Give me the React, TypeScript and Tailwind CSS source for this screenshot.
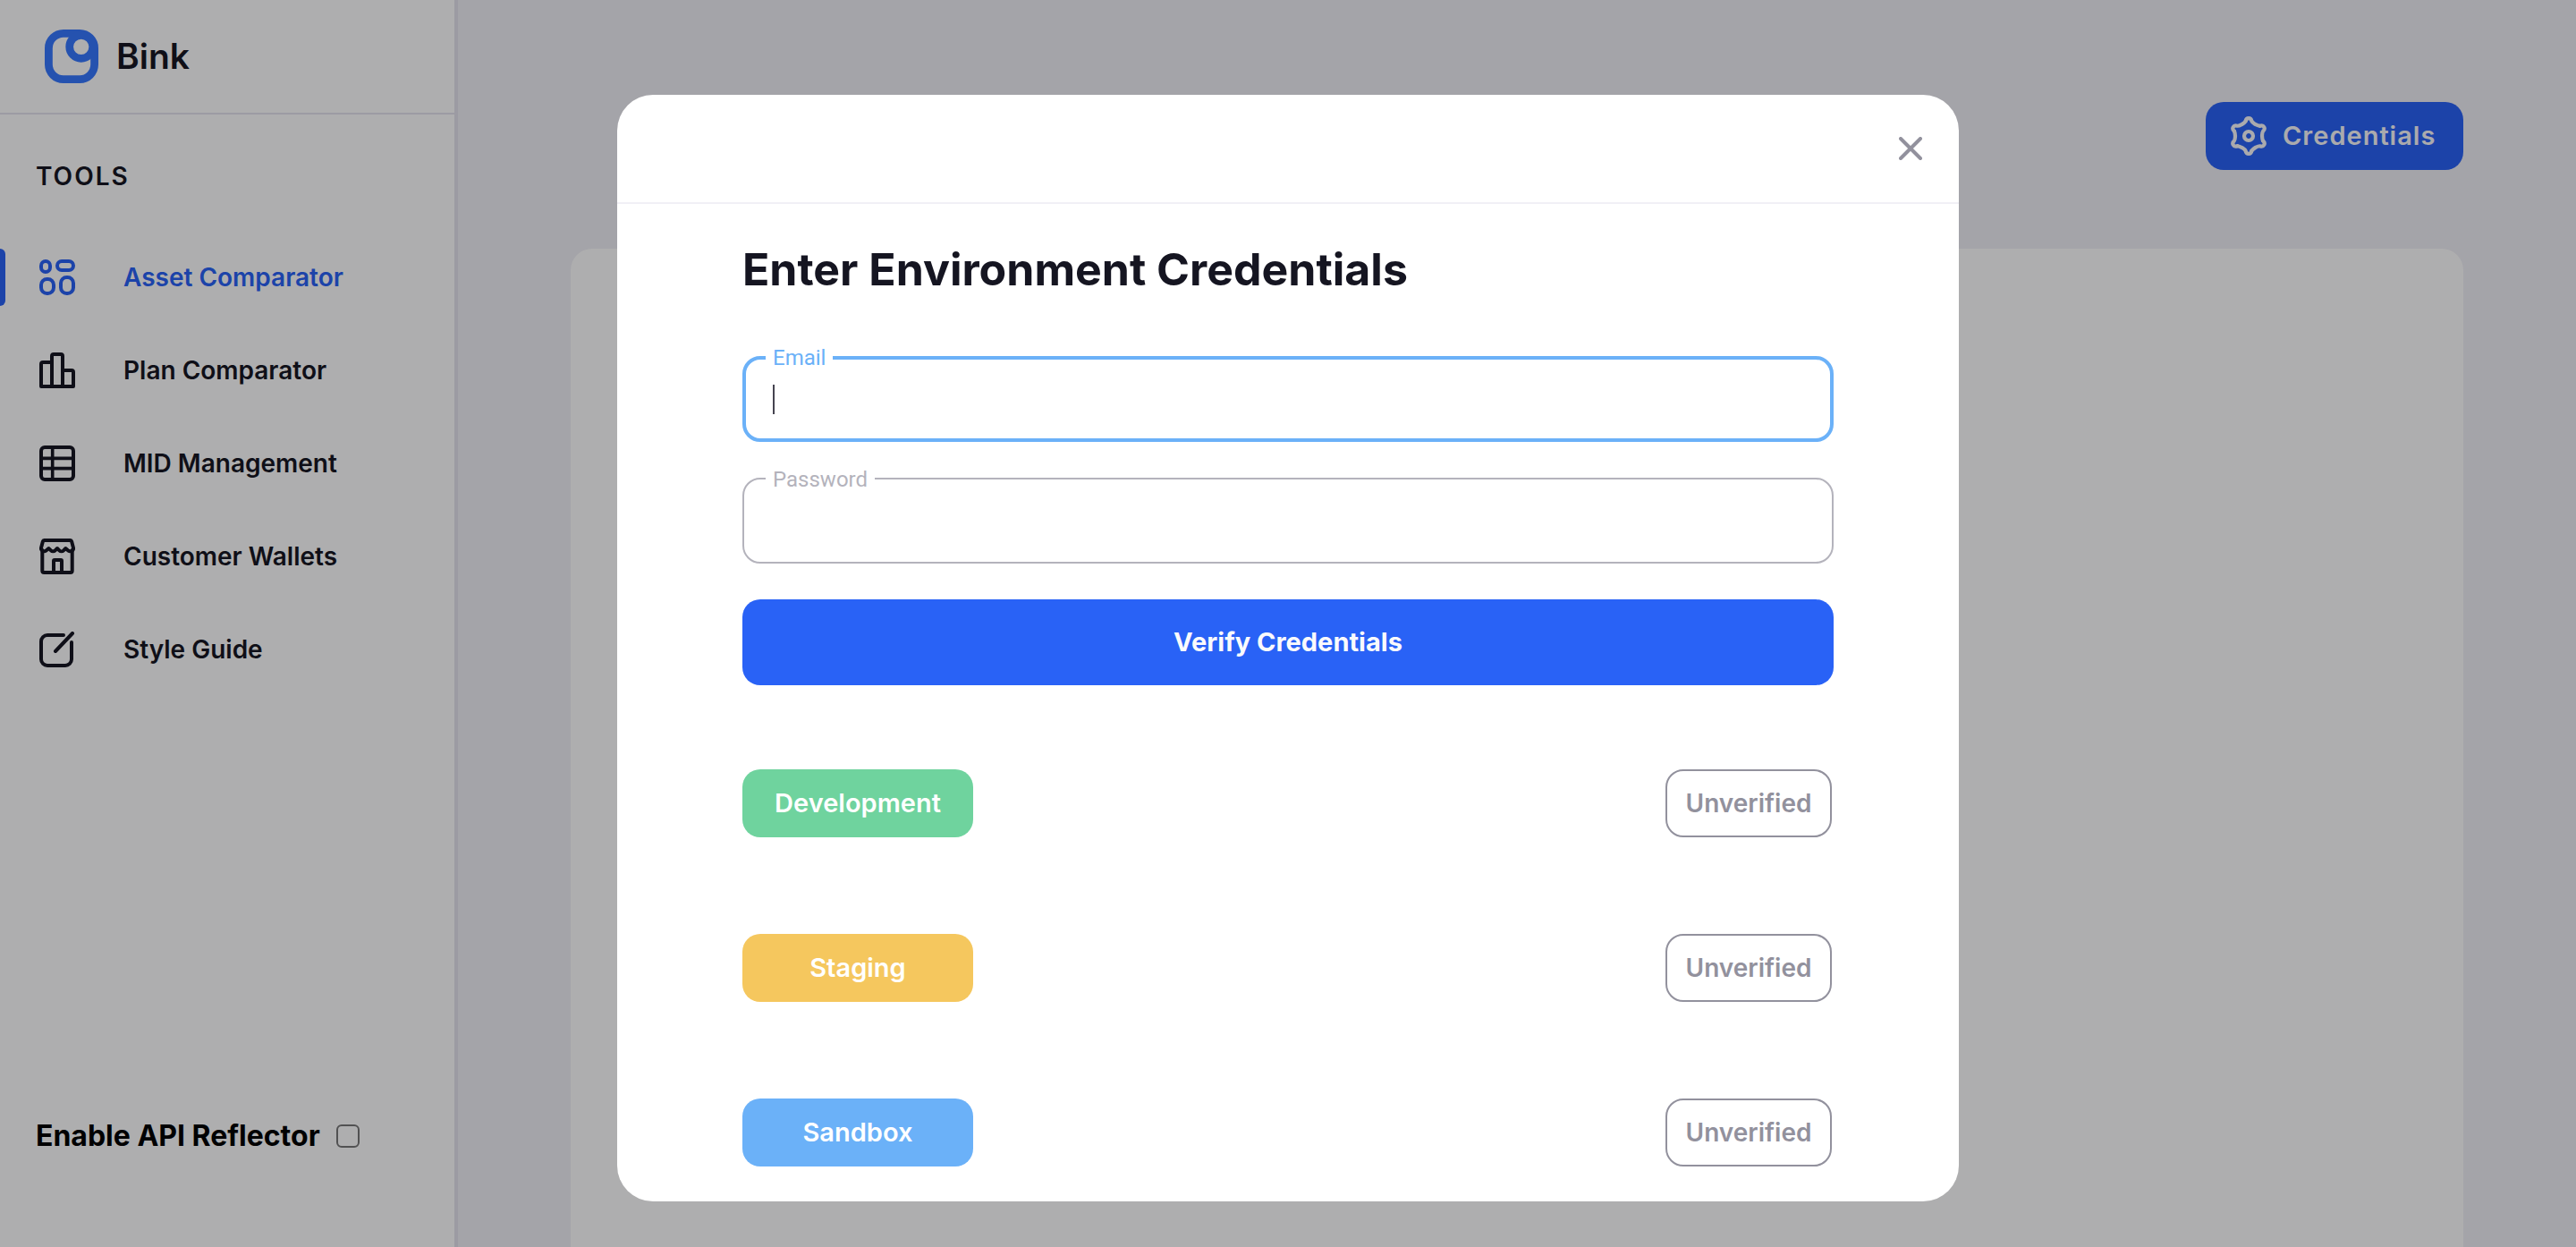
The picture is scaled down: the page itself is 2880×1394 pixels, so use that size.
import type { ReactNode } from 'react'

const LogoIcon = () => (
  <svg viewBox="0 0 60 60" fill="none" stroke="#3678ff" className="size-[60px]" aria-hidden="true">
    <rect x="4.4" y="4.4" width="51.2" height="51.2" rx="16.5" strokeWidth="8.8" />
    <circle cx="40.7" cy="19.3" r="13" strokeWidth="8.7" />
  </svg>
)

const NavIcon = ({ children }: { children: ReactNode }) => (
  <svg
    viewBox="0 0 40 40"
    fill="none"
    stroke="currentColor"
    strokeWidth="4"
    strokeLinecap="round"
    strokeLinejoin="round"
    className="size-10 shrink-0"
    aria-hidden="true"
  >
    {children}
  </svg>
)

const AssetIcon = () => (
  <NavIcon>
    <rect x="2" y="2" width="10" height="12" rx="5" />
    <rect x="20" y="2" width="18" height="10" rx="5" />
    <rect x="2" y="22" width="14" height="16" rx="6.5" />
    <rect x="24" y="20" width="14" height="18" rx="6.5" />
  </NavIcon>
)

const PlanIcon = () => (
  <NavIcon>
    <path d="M14 11H4a2 2 0 0 0-2 2V38H38V22a2 2 0 0 0-2-2H26" />
    <path d="M14 38V4a2 2 0 0 1 2-2h8a2 2 0 0 1 2 2V38" />
  </NavIcon>
)

const MidIcon = () => (
  <NavIcon>
    <rect x="2" y="2" width="36" height="36" rx="4" />
    <path d="M14.7 2V38M2 14.4H38M2 25.6H38" strokeWidth="3.6" strokeLinecap="butt" />
  </NavIcon>
)

const WalletIcon = () => (
  <NavIcon>
    <path d="M5.4 2H34.6a1.6 1.6 0 0 1 1.5 1.2L38 10.5c.6 3-3.500 4.600-5.500 3.200L29.400 11l-2.600 2.600c-1 1-3.200 1-4.200 0L20 11l-2.600 2.600c-1 1-3.200 1-4.200 0L10.400 11l-3.100 2.700C5.300 15.100 1.400 13.500 2 10.500L3.900 3.200A1.600 1.600 0 0 1 5.400 2Z" />
    <path d="M3.300 13V36a2 2 0 0 0 2 2H34.700a2 2 0 0 0 2-2V13" />
    <path d="M16 38V25a1 1 0 0 1 1-1h7a1 1 0 0 1 1 1V38" />
  </NavIcon>
)

const StyleIcon = () => (
  <NavIcon>
    <path d="M27 4H9a7 7 0 0 0-7 7V31a7 7 0 0 0 7 7H29a7 7 0 0 0 7-7V12" />
    <path d="M37 2L18 22" />
  </NavIcon>
)

const gearAngles = [0, 60, 120, 180, 240, 300]

const GearIcon = () => (
  <svg
    viewBox="-20 -22 40 44"
    fill="none"
    stroke="currentColor"
    strokeWidth="4.2"
    strokeLinecap="round"
    className="h-11 w-10"
    aria-hidden="true"
  >
    {gearAngles.map((angle) => (
      <path
        key={angle}
        transform={`rotate(${angle})`}
        d="M-3.400 -16.600C-2.600 -21 2.600 -21 3.400 -16.600Q4 -15.200 7.300 -13.100Q11 -11.200 12.680 -11.240"
      />
    ))}
    <circle r="5" />
  </svg>
)

const CloseIcon = () => (
  <svg
    viewBox="0 0 26 26"
    fill="none"
    stroke="currentColor"
    strokeWidth="4"
    strokeLinecap="round"
    className="size-[26px]"
    aria-hidden="true"
  >
    <path d="M2 2L24 24M24 2L2 24" />
  </svg>
)

const tools = [
  { label: 'Asset Comparator', icon: <AssetIcon />, active: true },
  { label: 'Plan Comparator', icon: <PlanIcon />, active: false },
  { label: 'MID Management', icon: <MidIcon />, active: false },
  { label: 'Customer Wallets', icon: <WalletIcon />, active: false },
  { label: 'Style Guide', icon: <StyleIcon />, active: false },
]

const environments = [
  { label: 'Development', color: 'bg-[#6fd39e]' },
  { label: 'Staging', color: 'bg-[#f5c75e]' },
  { label: 'Sandbox', color: 'bg-[#6bb1f8]' },
]

const Sidebar = () => (
  <aside className="flex w-[512px] shrink-0 flex-col border-r-4 border-[#e5e4ee] bg-white">
    <div className="flex h-32 items-center gap-5 border-b-2 border-[#e5e4ee] pl-[50px]">
      <LogoIcon />
      <span className="text-[39px] font-semibold">Bink</span>
    </div>
    <h2 className="mb-15 pt-12 pl-10 text-[28px] leading-[42px] font-semibold tracking-[2px]">TOOLS</h2>
    <nav className="flex flex-col gap-10">
      {tools.map((tool) => (
        <a
          key={tool.label}
          href="#"
          className={
            tool.active
              ? 'relative flex h-16 items-center gap-[54px] pl-11 text-[28px] font-semibold text-[#2962f6]'
              : 'relative flex h-16 items-center gap-[54px] pl-11 text-[28px] font-semibold'
          }
        >
          {tool.active && <span className="absolute inset-y-0 left-0 w-1.5 rounded-r-md bg-[#2962f6]" />}
          {tool.icon}
          {tool.label}
        </a>
      ))}
    </nav>
    <label className="mt-auto flex items-center gap-[18px] pb-[100px] pl-10 text-[32px] leading-[48px] font-bold text-black">
      Enable API Reflector
      <input type="checkbox" className="size-[26px] appearance-none rounded-md border-2 border-[#767676] bg-white" />
    </label>
  </aside>
)

const Field = ({ id, label, type, focused }: { id: string; label: string; type: string; focused?: boolean }) => (
  <div className="relative">
    <input
      id={id}
      type={type}
      className={
        focused
          ? 'block h-24 w-full rounded-[20px] border-4 border-[#6bb1f8] px-8 text-[28px] caret-transparent outline-none'
          : 'block h-24 w-full rounded-[20px] border-2 border-[#b4b3bc] px-8 text-[28px] outline-none'
      }
    />
    <label
      htmlFor={id}
      className={
        focused
          ? 'absolute -top-3 left-[26px] bg-white px-2 font-[Roboto,sans-serif] text-[24px] leading-7 text-[#6bb1f8]'
          : 'absolute -top-3 left-[26px] bg-white px-2 font-[Roboto,sans-serif] text-[24px] leading-7 text-[#b4b3bc]'
      }
    >
      {label}
    </label>
    {focused && <span className="absolute top-8 left-[34px] h-[33px] w-0.5 bg-[#454450]" />}
  </div>
)

const CredentialsModal = () => (
  <div className="fixed inset-0 flex items-start justify-center bg-[#020207]/32 pt-[106px]">
    <div role="dialog" aria-modal="true" aria-labelledby="dialog-title" className="w-[1500px] rounded-[40px] bg-white">
      <div className="flex h-[122px] items-center justify-end border-b-2 border-[#f1f0f6] pr-[41px]">
        <button type="button" aria-label="Close" className="text-[#92919d]">
          <CloseIcon />
        </button>
      </div>
      <div className="px-[140px] pt-10 pb-[39px]">
        <h1 id="dialog-title" className="text-[50px] leading-[66px] font-bold">
          Enter Environment Credentials
        </h1>
        <form className="mt-16 flex flex-col gap-10">
          <Field id="email" label="Email" type="email" focused />
          <Field id="password" label="Password" type="password" />
          <button type="button" className="h-24 rounded-[20px] bg-[#2962f6] text-[29px] font-bold text-[#fafafc]">
            Verify Credentials
          </button>
        </form>
        <ul className="mt-[94px] flex flex-col gap-[108px] pr-0.5 font-semibold">
          {environments.map((env) => (
            <li key={env.label} className="flex h-[76px] items-stretch justify-between">
              <span
                className={`flex w-[258px] items-center justify-center rounded-[20px] text-[29px] text-white ${env.color}`}
              >
                {env.label}
              </span>
              <span className="flex w-[186px] items-center justify-center rounded-[20px] border-2 border-[#92919d] text-[28px] text-[#92919d]">
                Unverified
              </span>
            </li>
          ))}
        </ul>
      </div>
    </div>
  </div>
)

export default function App() {
  return (
    <div className="flex h-screen overflow-hidden bg-[#f1f0f6] font-[Inter,sans-serif] text-[#151521]">
      <Sidebar />
      <main className="flex flex-1 flex-col px-[126px] pt-[114px]">
        <div className="mb-22 flex justify-end">
          <button
            type="button"
            className="flex h-[76px] w-[288px] items-center gap-[18px] rounded-[20px] bg-[#2962f6] pl-7 text-[29px] font-semibold tracking-[1px] text-[#fafafc]"
          >
            <GearIcon />
            Credentials
          </button>
        </div>
        <section className="flex-1 rounded-t-3xl bg-white" />
      </main>
      <CredentialsModal />
    </div>
  )
}
